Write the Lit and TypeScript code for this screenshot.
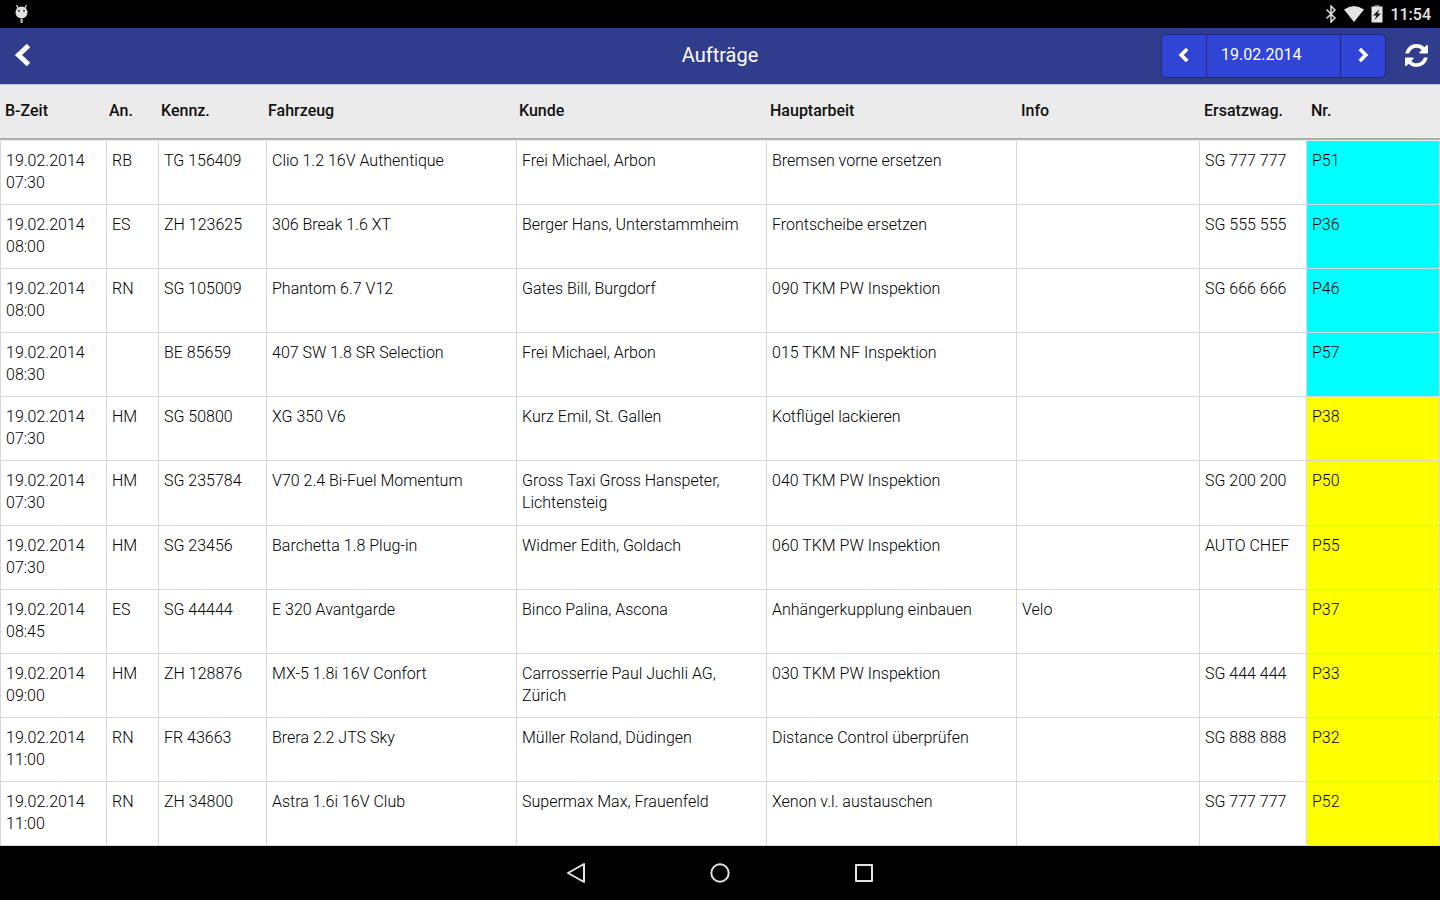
import { LitElement, html, css, svg } from "lit";
import { customElement, state } from "lit/decorators.js";
import { classMap } from "lit/directives/class-map.js";

interface Order {
  date: string;
  time: string;
  advisor: string;
  plate: string;
  vehicle: string;
  customer: string;
  work: string;
  info: string;
  loaner: string;
  nr: string;
  status: "arrived" | "open";
}

const order = (
  time: string, advisor: string, plate: string, vehicle: string, customer: string,
  work: string, info: string, loaner: string, nr: string, status: Order["status"],
): Order => ({ date: "19.02.2014", time, advisor, plate, vehicle, customer, work, info, loaner, nr, status });

const ORDERS: Order[] = [
  order("07:30", "RB", "TG 156409", "Clio 1.2 16V Authentique", "Frei Michael, Arbon", "Bremsen vorne ersetzen", "", "SG 777 777", "P51", "arrived"),
  order("08:00", "ES", "ZH 123625", "306 Break 1.6 XT", "Berger Hans, Unterstammheim", "Frontscheibe ersetzen", "", "SG 555 555", "P36", "arrived"),
  order("08:00", "RN", "SG 105009", "Phantom 6.7 V12", "Gates Bill, Burgdorf", "090 TKM PW Inspektion", "", "SG 666 666", "P46", "arrived"),
  order("08:30", "", "BE 85659", "407 SW 1.8 SR Selection", "Frei Michael, Arbon", "015 TKM NF Inspektion", "", "", "P57", "arrived"),
  order("07:30", "HM", "SG 50800", "XG 350 V6", "Kurz Emil, St. Gallen", "Kotflügel lackieren", "", "", "P38", "open"),
  order("07:30", "HM", "SG 235784", "V70 2.4 Bi-Fuel Momentum", "Gross Taxi Gross Hanspeter, Lichtensteig", "040 TKM PW Inspektion", "", "SG 200 200", "P50", "open"),
  order("07:30", "HM", "SG 23456", "Barchetta 1.8 Plug-in", "Widmer Edith, Goldach", "060 TKM PW Inspektion", "", "AUTO CHEF", "P55", "open"),
  order("08:45", "ES", "SG 44444", "E 320 Avantgarde", "Binco Palina, Ascona", "Anhängerkupplung einbauen", "Velo", "", "P37", "open"),
  order("09:00", "HM", "ZH 128876", "MX-5 1.8i 16V Confort", "Carrosserrie Paul Juchli AG, Zürich", "030 TKM PW Inspektion", "", "SG 444 444", "P33", "open"),
  order("11:00", "RN", "FR 43663", "Brera 2.2 JTS Sky", "Müller Roland, Düdingen", "Distance Control überprüfen", "", "SG 888 888", "P32", "open"),
  order("11:00", "RN", "ZH 34800", "Astra 1.6i 16V Club", "Supermax Max, Frauenfeld", "Xenon v.l. austauschen", "", "SG 777 777", "P52", "open"),
];

const HEADINGS = ["B-Zeit", "An.", "Kennz.", "Fahrzeug", "Kunde", "Hauptarbeit", "Info", "Ersatzwag.", "Nr."];

const chevronLeft = svg`<path d="M14 2.500 6.500 10l7.500 7.500" fill="none" stroke="currentColor" stroke-width="4.600"/>`;
const chevronRight = svg`<path d="M6 2.500l7.500 7.500L6 17.500" fill="none" stroke="currentColor" stroke-width="4.600"/>`;

@customElement("status-bar")
export class StatusBar extends LitElement {
  static styles = css`
    :host {
      display: flex;
      align-items: center;
      justify-content: space-between;
      height: 28px;
      padding: 0 9px 0 13px;
      background: #000;
      color: #e4e4e4;
    }
    .tray { display: flex; align-items: center; gap: 7px; }
    .clock { font-size: 16px; line-height: 28px; font-weight: 500; padding-top: 2px; }
    svg { display: block; }
  `;

  render() {
    return html`
      <svg width="17" height="20" viewBox="0 0 17 20" aria-hidden="true">
        <path d="M3.500 1 5 4M13.500 1 12 4" stroke="#ddd" stroke-width="1.200"/>
        <ellipse cx="8.500" cy="8.500" rx="6" ry="6" fill="#e0e0e0"/>
        <rect x="5" y="6" width="2" height="1.600" fill="#444"/>
        <rect x="10" y="6" width="2" height="1.600" fill="#444"/>
        <rect x="7.500" y="15" width="2.200" height="4" fill="#bbb"/>
      </svg>
      <div class="tray">
        <svg width="12" height="18" viewBox="0 0 12 18" aria-hidden="true">
          <path d="M1.500 4.500 10 13l-4 4V1l4 4-8.500 8.500" fill="none" stroke="#ddd" stroke-width="1.500"/>
        </svg>
        <svg width="20" height="16" viewBox="0 0 20 16" aria-hidden="true">
          <path d="M0 3.500Q10-3.500 20 3.500L10 16z" fill="#e4e4e4"/>
        </svg>
        <svg width="12" height="18" viewBox="3 0 12 18" aria-hidden="true">
          <path d="M6.500 0h5v2h-5z" fill="#777"/>
          <path d="M3.500 1.500h11v16h-11z" fill="#e4e4e4"/>
          <path d="M11.500 4 5 10.500h3.500L6.500 15l6.500-6.500H9.500z" fill="#111"/>
        </svg>
        <time class="clock">11:54</time>
      </div>
    `;
  }
}

@customElement("nav-keys")
export class NavKeys extends LitElement {
  static styles = css`
    :host {
      display: flex;
      align-items: center;
      justify-content: center;
      gap: 120px;
      height: 54px;
      background: #000;
    }
    .key { display: block; width: 24px; height: 24px; padding: 0; border: 0; background: none; }
    .glyph { display: block; fill: none; stroke: #e4e4e4; stroke-width: 2; stroke-linejoin: round; }
  `;

  render() {
    return html`
      <button class="key" aria-label="Zurück">
        <svg class="glyph" width="24" height="24" viewBox="0 0 24 24"><path d="M20 3v18L4 12z"/></svg>
      </button>
      <button class="key" aria-label="Startseite">
        <svg class="glyph" width="24" height="24" viewBox="0 0 24 24"><circle cx="12" cy="12" r="8.700"/></svg>
      </button>
      <button class="key" aria-label="Übersicht">
        <svg class="glyph" width="24" height="24" viewBox="0 0 24 24"><rect x="4" y="4" width="16" height="16"/></svg>
      </button>
    `;
  }
}

@customElement("app-root")
export class AppRoot extends LitElement {
  static styles = css`
    :host {
      display: flex;
      flex-direction: column;
      min-height: 100vh;
      background: #fff;
      color: #111;
      font-family: Roboto, "Liberation Sans", sans-serif;
      font-size: 16px;
      line-height: 22px;
    }
    .bar {
      display: grid;
      grid-template-columns: 1fr auto 1fr;
      align-items: center;
      height: 56px;
      padding: 0 12px;
      background: #303c8c;
      color: #fff;
    }
    .title { margin: 0; padding-bottom: 2px; font-size: 20px; line-height: 24px; font-weight: 400; }
    .tools { display: flex; align-items: center; justify-content: flex-end; gap: 19px; }
    .icon-button { display: block; padding: 0 0 2px; border: 0; background: none; color: #fff; justify-self: start; }
    .icon-button svg { display: block; }
    .stepper {
      display: flex;
      height: 44px;
      box-sizing: border-box;
      border: 1px solid #20287c;
      border-radius: 5px;
      background: #3044d6;
      overflow: hidden;
    }
    .step {
      display: flex;
      align-items: center;
      justify-content: center;
      width: 44px;
      padding: 0 0 2px;
      border: 0;
      background: none;
      color: #fff;
    }
    .date {
      width: 135px;
      box-sizing: border-box;
      padding: 0 0 2px 14px;
      border: solid #20287c;
      border-width: 0 1px;
      border-radius: 0;
      background: none;
      color: #fff;
      font: inherit;
      outline: none;
    }
    .orders { display: flex; flex-direction: column; flex: 1; }
    .head { display: block; background: #ebebeb; border-top: 1px solid #c4c6d6; border-bottom: 2px solid #adadad; }
    .head-row {
      display: grid;
      grid-template-columns:
        minmax(0, 104fr) minmax(0, 52fr) minmax(0, 107fr) minmax(0, 251fr) minmax(0, 251fr)
        minmax(0, 251fr) minmax(0, 183fr) minmax(0, 107fr) minmax(0, 134fr);
    }
    .heading { padding: 15px 0 16px 5px; text-align: left; font-weight: 500; }
    .body { display: flex; flex-direction: column; flex: 1; border-top: 1px solid #eee; color: #000; font-weight: 300; }
    .row {
      flex: 1 0 auto;
      display: grid;
      grid-template-columns:
        minmax(0, 106fr) minmax(0, 52fr) minmax(0, 108fr) minmax(0, 250fr) minmax(0, 250fr)
        minmax(0, 250fr) minmax(0, 183fr) minmax(0, 107fr) minmax(0, 134fr);
    }
    .cell {
      padding: 9px 4px 9px 5px;
      border-left: 1px solid #d8d8d8;
      border-bottom: 1px solid #d8d8d8;
    }
    .cell:last-child { border-right: 1px solid #d8d8d8; }
    .arrived { background: #0ff; }
    .open { background: #ff0; }
  `;

  @state() private day = "19.02.2014";

  private renderRow(o: Order) {
    const texts = [o.advisor, o.plate, o.vehicle, o.customer, o.work, o.info, o.loaner];
    return html`
      <tr class="row">
        <td class="cell">${o.date}<br />${o.time}</td>
        ${texts.map((t) => html`<td class="cell">${t}</td>`)}
        <td class=${classMap({ cell: true, [o.status]: true })}>${o.nr}</td>
      </tr>
    `;
  }

  render() {
    return html`
      <status-bar></status-bar>
      <header class="bar">
        <button class="icon-button" aria-label="Zurück">
          <svg width="20" height="26" viewBox="0 0 20 26"><path d="M16.500 3.500 6.500 13l10 9.500" fill="none" stroke="#fff" stroke-width="5"/></svg>
        </button>
        <h1 class="title">Aufträge</h1>
        <div class="tools">
          <div class="stepper">
            <button class="step" aria-label="Vorheriger Tag">
              <svg width="16" height="16" viewBox="0 0 20 20">${chevronLeft}</svg>
            </button>
            <input class="date" aria-label="Datum" .value=${this.day} />
            <button class="step" aria-label="Nächster Tag">
              <svg width="16" height="16" viewBox="0 0 20 20">${chevronRight}</svg>
            </button>
          </div>
          <button class="icon-button" aria-label="Aktualisieren">
            <svg width="23" height="23" viewBox="0 0 1536 1536">
              <path fill="#fff" d="M1511 928q0 5-1 7-64 268-268 434.500T764 1536q-146 0-282.500-55T238 1324l-129 129q-19 19-45 19t-45-19-19-45V960q0-26 19-45t45-19h448q26 0 45 19t19 45-19 45l-137 137q71 66 161 102t187 36q134 0 250-65t186-179q11-17 53-117 8-23 30-23h192q13 0 22.500 9.500t9.500 22.500zm25-800v448q0 26-19 45t-45 19h-448q-26 0-45-19t-19-45 19-45l138-138Q969 256 768 256q-134 0-250 65T332 500q-11 17-53 117-8 23-30 23H50q-13 0-22.500-9.500T18 608v-7q65-268 270-434.500T768 0q146 0 284 55.500T1297 212l130-129q19-19 45-19t45 19 19 45z"/>
            </svg>
          </button>
        </div>
      </header>
      <table class="orders">
        <thead class="head">
          <tr class="head-row">
            ${HEADINGS.map((h) => html`<th class="heading" scope="col">${h}</th>`)}
          </tr>
        </thead>
        <tbody class="body">
          ${ORDERS.map((o) => this.renderRow(o))}
        </tbody>
      </table>
      <nav-keys></nav-keys>
    `;
  }
}
